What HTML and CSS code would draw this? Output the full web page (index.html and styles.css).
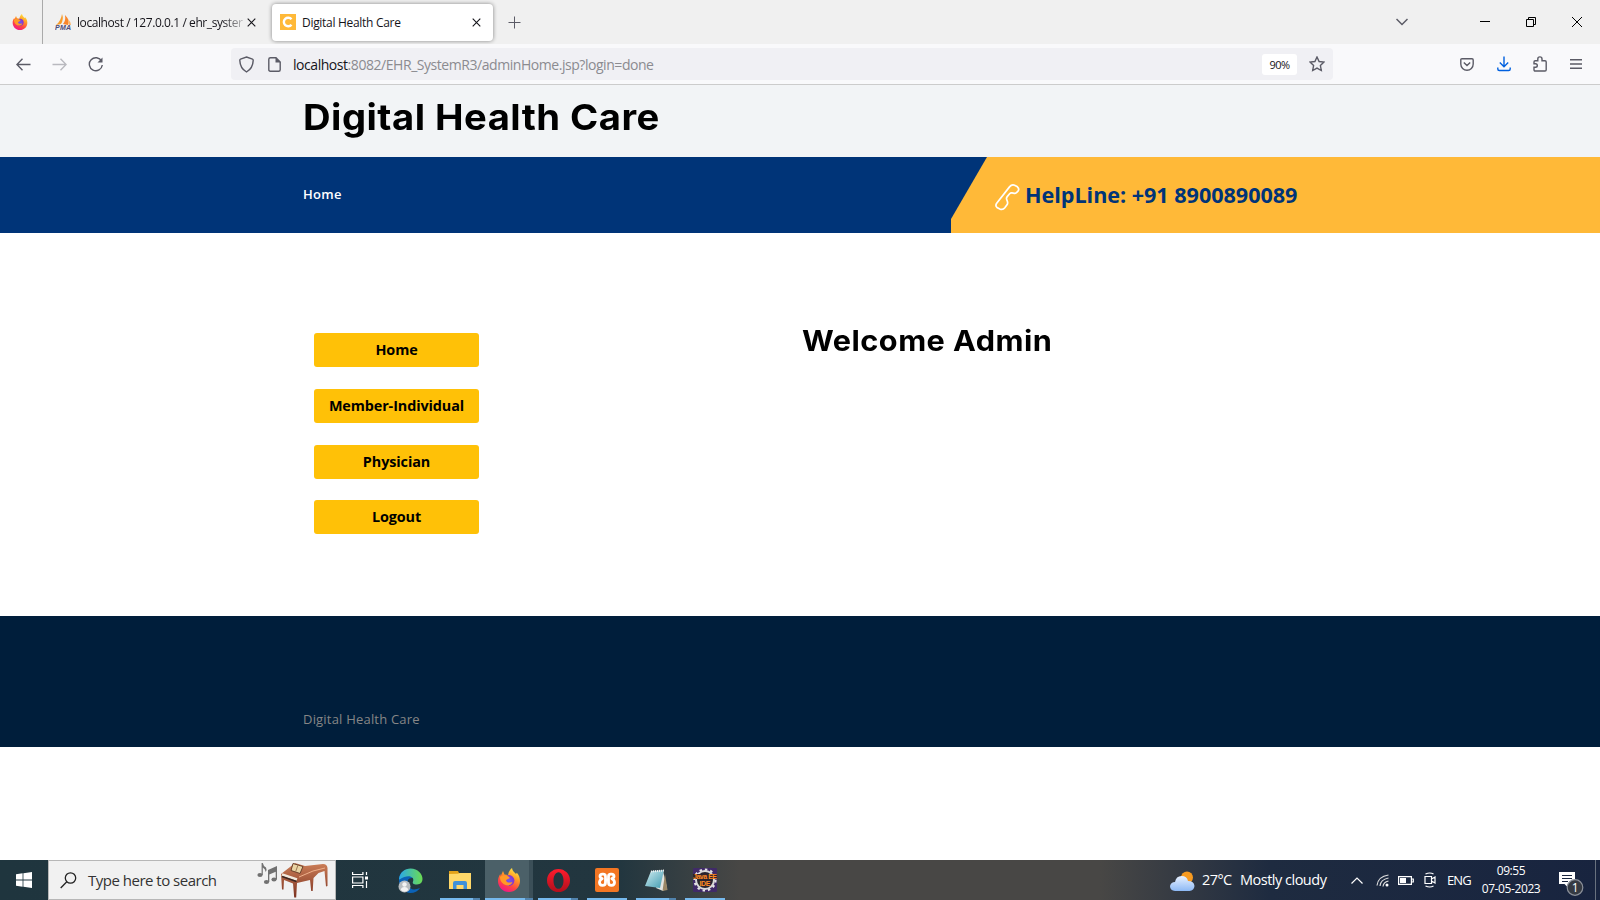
FILE: index.html
```html
<!DOCTYPE html>
<html lang="en">
<head>
<meta charset="utf-8">
<title>Digital Health Care</title>
<link rel="stylesheet" href="styles.css">
</head>
<body>
<svg class="defs" width="0" height="0" aria-hidden="true">
  <defs>
    <linearGradient id="fxFlame" x1="0.8" y1="0" x2="0.3" y2="1"><stop offset="0" stop-color="#fff04a"/><stop offset=".35" stop-color="#ffa025"/><stop offset=".7" stop-color="#ff4541"/><stop offset="1" stop-color="#f0148c"/></linearGradient>
    <radialGradient id="fxGlobe"><stop offset="0" stop-color="#6b5cf5"/><stop offset="1" stop-color="#8a32c8"/></radialGradient>
    <linearGradient id="edgeGreen" x1="0" y1="0" x2="1" y2="0"><stop offset="0" stop-color="#2aa9e8"/><stop offset="1" stop-color="#6bdc52"/></linearGradient>
    <linearGradient id="cloud" x1="0" y1="0" x2="0" y2="1"><stop offset="0" stop-color="#e8f1ff"/><stop offset="1" stop-color="#8db9f5"/></linearGradient>
    <linearGradient id="opera" x1="0" y1="0" x2="0" y2="1"><stop offset="0" stop-color="#ff1b2d"/><stop offset="1" stop-color="#b0101c"/></linearGradient>
    <linearGradient id="pad" x1="0" y1="0" x2="1" y2="1"><stop offset="0" stop-color="#d3eef2"/><stop offset="1" stop-color="#3f9bb0"/></linearGradient>
    <linearGradient id="wood" x1="0" y1="0" x2="0" y2="1"><stop offset="0" stop-color="#cd7f58"/><stop offset="1" stop-color="#7c3220"/></linearGradient>
    <symbol id="firefox" viewBox="0 0 24 24">
      <path fill="url(#fxFlame)" d="M12 24C5.500 24 1 19 1 13c0-3 1-5 2.300-7l.4 2L6 3l1.500 3.500L11 7c.5-3 2-5.500 4-7 .3 3 2.500 4.200 4 6l.8-1.200C22 7 23 10 23 13c0 6.200-5 11-11 11z"/>
      <circle cx="12" cy="12.500" r="5.400" fill="url(#fxGlobe)"/>
      <path fill="#ff9a26" d="M3 9c3-2.500 6-2 8.500-.5L13 10l-3 1.500C8.500 12 9 14 11 14.500c2 .4 3-.8 4.500-.2-1.500 3.500-6 4-9 1.700C4 14 3 12 3 9z"/>
    </symbol>
  </defs>
</svg>
<div class="screen">
  <div class="tabs">
    <svg class="fx-tab" width="16" height="16"><use href="#firefox"/></svg>
    <div class="tab tab-idle">
      <svg width="17" height="17" viewBox="0 0 17 17"><path d="M7 0q2 5-1 10L1 11q5-4 6-11z" fill="#f89c2a"/><path d="M10 1q5 5 3 10l-5-1q3-3 2-9z" fill="#f9852b"/><path d="M13 5q3 3 3 6h-2z" fill="#fbb365"/><text class="pma" x="0" y="15.500" textLength="16">PMA</text></svg>
      <span class="tab-name fade">localhost / 127.0.0.1 / ehr_syster</span>
      <svg class="x" width="9" height="9" viewBox="0 0 9 9"><path d="M.7.7l7.600 7.600M8.300.7L.7 8.300"/></svg>
    </div>
    <div class="tab tab-active">
      <span class="c-icon"><svg width="16" height="16" viewBox="0 0 16 16"><path d="M11.500 5.300A4.300 4.300 0 1 0 11.500 10.700" fill="none" stroke="#fff" stroke-width="2.400"/></svg></span>
      <span class="tab-name">Digital Health Care</span>
      <svg class="x" width="9" height="9" viewBox="0 0 9 9"><path d="M.7.7l7.600 7.600M8.300.7L.7 8.300"/></svg>
    </div>
    <svg class="plus" width="13" height="13" viewBox="0 0 13 13"><path d="M6.500.5v12M.5 6.500h12"/></svg>
    <div class="window-buttons">
      <svg width="12" height="8" viewBox="0 0 12 8" class="grey"><path d="M.5 1L6 6.500 11.500 1"/></svg>
      <svg width="10" height="10" viewBox="0 0 10 10"><path d="M0 4.500h10"/></svg>
      <svg width="10" height="10" viewBox="0 0 10 10"><path d="M.5 2.500h7v7h-7zM2.500 2V.5h7v7H8"/></svg>
      <svg width="10" height="10" viewBox="0 0 10 10"><path d="M0 0l10 10M10 0L0 10"/></svg>
    </div>
  </div>
  <div class="toolbar">
    <svg class="back" width="15" height="13" viewBox="0 0 15 13"><path d="M14.500 6.500H1M6.500.8L.9 6.500l5.600 5.700"/></svg>
    <svg class="forward" width="15" height="13" viewBox="0 0 15 13"><path d="M.5 6.500H14M8.500.8l5.600 5.700-5.600 5.700"/></svg>
    <svg class="reload" width="16" height="16" viewBox="0 0 16 16"><path d="M13.600 5.200A6.500 6.500 0 1 0 14.300 9"/><path d="M14.500 1.500v5H9.500z" fill="#5b5b66" stroke="none"/></svg>
    <div class="address">
      <svg class="shield" width="15" height="17" viewBox="0 0 15 17"><path d="M7.500 1L13.500 3.200q.8.300.7 1.200-.3 8-6.700 11.600Q1.100 12.400.8 4.400.7 3.500 1.500 3.200z"/></svg>
      <svg class="page-icon" width="13" height="15" viewBox="0 0 13 15"><path d="M2.500.8H8L12.200 5v7.700q0 1.500-1.500 1.500H2.300q-1.500 0-1.500-1.500V2.300Q.8.8 2.500.8z"/><path d="M7.500.5v5h5z" fill="#5b5b66" stroke="none"/></svg>
      <span class="url"><b>localhost</b>:8082/EHR_SystemR3/adminHome.jsp?login=done</span>
      <span class="zoom">90%</span>
      <svg class="star" width="16" height="16" viewBox="0 0 16 16"><path d="M8 1l2.100 4.500 4.900.6-3.600 3.400.9 5L8 12.100 3.700 14.500l.9-5L1 6.100l4.900-.6z"/></svg>
    </div>
    <div class="tools">
      <svg width="14" height="13" viewBox="0 0 14 13"><path d="M2 .8h10q1.200 0 1.200 1.200v4a6.200 6.200 0 0 1-12.400 0V2Q.8.800 2 .8zM3.800 4.500L7 7.600l3.200-3.100"/></svg>
      <svg class="download" width="14" height="16" viewBox="0 0 14 16"><path d="M7 .5v10M2.800 6.500L7 10.700l4.200-4.200M.8 11.500V13q0 1.500 1.500 1.500h9.400q1.500 0 1.500-1.500v-1.500"/></svg>
      <svg width="14" height="16" viewBox="0 0 14 16"><path d="M4.800 4.800V3a2 2 0 0 1 4.200 0v1.800h3q1.200 0 1.200 1.200v7.800q0 1.200-1.200 1.200H2.200Q1 15 1 13.800v-2.500h1.500a1.700 1.700 0 0 0 0-3.600H1V6q0-1.200 1.200-1.200z"/></svg>
      <svg width="12" height="10" viewBox="0 0 12 10"><path d="M0 .8h12M0 5h12M0 9.200h12"/></svg>
    </div>
  </div>
  <main class="site">
    <header class="brand"><h1>Digital Health Care</h1></header>
    <nav class="menu">
      <a class="menu-link">Home</a>
      <div class="helpline">
        <svg width="25" height="27" viewBox="0 0 25 27"><path d="M1.500 19.500L14.500 2.900q2.500-3 5.600-1.400l2.300 1.300q2.400 2.200.4 4.600l-1.300 1.300q-1.200 1-3 .5l-1.700-.3q-1.300-.1-2.200.9l-2.400 2.800q-1.200 1.500-.4 3.100l.6 1.900q.6 1.800-.4 3.200l-2.200 3q-2 2.500-5 1.200L2 23.500Q.1 21.600 1.500 19.500z" fill="none" stroke="#fff" stroke-width="1.700"/></svg>
        <span>HelpLine: +91 8900890089</span>
      </div>
    </nav>
    <section class="content">
      <div class="side"><a>Home</a><a>Member-Individual</a><a>Physician</a><a>Logout</a></div>
      <h2>Welcome Admin</h2>
    </section>
    <footer class="foot"><span>Digital Health Care</span></footer>
  </main>
  <div class="taskbar">
    <div class="start"><svg width="16" height="16" viewBox="0 0 16 16"><path fill="#fff" d="M0 2.300L6.600 1.300V7.600H0zM7.400 1.200L16 0v7.600H7.400zM0 8.400h6.600v6.300L0 13.700zM7.400 8.400H16V16l-8.600-1.200z"/></svg></div>
    <div class="search">
      <svg width="17" height="17" viewBox="0 0 17 17"><circle cx="10.500" cy="6" r="5.200"/><path d="M6.800 9.800L.7 16"/></svg>
      <span>Type here to search</span>
      <svg class="piano" width="72" height="36" viewBox="0 0 72 36">
        <g fill="#717171"><ellipse cx="3" cy="13" rx="2.600" ry="2"/><ellipse cx="9.500" cy="20" rx="2.600" ry="2"/><ellipse cx="17" cy="17.500" rx="2.600" ry="2"/><path d="M4.600 1h1.200q.5 3 3.200 4.500 1.200 2-.3 4.500Q8.500 7 5.800 5.500V13H4.600zM11 8l9-4v13.500h-1.300V9.700l-6.400 2.700V20H11z"/></g>
        <path fill="url(#wood)" d="M24 12L33 5l5-4 10 3 18-2q4 0 4.500 4v18l-1.500.5L67.500 9l-6 2-5 5-.8 13h-1.500L53 18l-13 3-.8 14.500h-2L36 21.500l-9-3.500-.5 9.500H25z"/>
        <path d="M25 12.500l15 5" stroke="#f2e9dd" stroke-width="2.500"/><path d="M25 14.500l14.500 5" stroke="#3b2621" stroke-width="1.500"/>
        <path d="M36 1.500l10 3-3 7-9-3z" fill="#ead4a4" stroke="#69402b"/><path d="M41 3l-2.500 7" stroke="#9c7954"/><path d="M42 15l14-6 12-3" stroke="#eeb08b" fill="none"/>
      </svg>
    </div>
    <div class="apps">
      <div class="app view"><svg width="17" height="16" viewBox="0 0 17 16" fill="none" stroke="#fff" stroke-width="1.200"><path d="M.6 0v2.500h10.300V0M.6 16v-2.500h10.300V16M.6 5h10.300v6H.6zM14.500 0v3M14.500 9v7"/><path d="M13 4.500h3v3h-3z" fill="#fff" stroke="none"/></svg></div>
      <div class="app edge"><svg width="25" height="25" viewBox="0 0 25 25"><path fill="#0b63b8" d="M1 12C1 5 6 1 12 1c8 0 9 7 9 7l-7 2q-6 0-4 7 3 7 12 3-3 5-10 5C5 24 1 19 1 12z"/><path fill="url(#edgeGreen)" d="M1 11C2 4 7 .5 12.500.5 20 .5 24.500 6 24.500 11q0 5-5.500 5.500c-3 .2-5-1-4-3 2-5-5-8-13.500-2z"/><circle cx="6.500" cy="18.500" r="6" fill="#b9bdc0"/><circle cx="6.500" cy="16.500" r="2.200" fill="#f3f3f3"/><path d="M2.700 22q.5-3 3.800-3t3.800 3q-3.800 3.500-7.600 0z" fill="#f3f3f3"/></svg></div>
      <div class="app run split"><svg width="22" height="20" viewBox="0 0 22 20"><path fill="#e3a21a" d="M0 1h9l1 2v3H0z"/><path fill="#ffd869" d="M0 4l9-.2L10.500 3H22v16H0z"/><path fill="#3f91d8" d="M4 19v-6q0-2 2-2h10q2 0 2 2v6h-3.500v-4h-7v4z"/></svg></div>
      <div class="app run split current"><svg width="24" height="24"><use href="#firefox"/></svg></div>
      <div class="app run split"><svg width="23" height="23" viewBox="0 0 23 23"><path fill="url(#opera)" fill-rule="evenodd" d="M11.500 0a11.500 11.500 0 1 0 0 23a11.500 11.500 0 1 0 0-23zM11.500 3.200c3 0 5 3.700 5 8.300s-2 8.300-5 8.300-5-3.700-5-8.300 2-8.300 5-8.300z"/></svg></div>
      <div class="app run"><svg width="24" height="24" viewBox="0 0 24 24"><rect width="24" height="24" rx="2" fill="#f37623"/><g fill="none" stroke="#fff" stroke-width="2.800" stroke-linejoin="round"><path d="M10.500 12V8.500Q10.500 6.200 8.200 6.200H7.500Q5 6.200 5 8.300q0 1.700 2.200 2.400Q4.500 11.800 4.500 14.500t3 2.900q3 0 3-2.900V12h3V8.500q0-2.300 2.300-2.300h.7q2.500 0 2.500 2.100 0 1.700-2.200 2.400 2.700 1.100 2.700 3.800t-3 2.900q-3 0-3-2.900V12"/></g></svg></div>
      <div class="app run split"><svg width="23" height="23" viewBox="0 0 23 23"><path fill="#e3e4df" d="M18 2l4 17-4 3-7-3z"/><path fill="#9a8766" d="M20 5l2.500 16-5 1z"/><path fill="url(#pad)" d="M6 2l13-1-4 18-15-2z"/><path d="M6 2.500l13-1" stroke="#eee" stroke-width="2" stroke-dasharray="1 1"/></svg></div>
      <div class="app run"><svg width="24" height="24" viewBox="0 0 24 24"><rect width="24" height="24" rx="1" fill="#402a68"/><circle cx="12" cy="12" r="9" fill="#28232d" stroke="#d9d9d9" stroke-width="2"/><circle cx="12" cy="12" r="10.600" fill="none" stroke="#e6e6e6" stroke-width="2" stroke-dasharray="2.500 3"/><path d="M0 6h24v5H0z" fill="#30242c"/><g class="ide"><text x="0" y="11" textLength="24">Java EE</text><text x="6.500" y="17.500" textLength="11">IDE</text></g></svg></div>
    </div>
    <div class="tray">
      <svg class="weather" width="25" height="21" viewBox="0 0 25 21"><circle cx="17" cy="6.500" r="6" fill="#f79a20"/><path fill="url(#cloud)" d="M5 20q-5-.5-5-5 1-4 5-4 1-6 6.500-6T18 10q6 0 6.500 5-.5 4.500-5 5z"/></svg>
      <span class="temp">27°C</span><span class="sky">Mostly cloudy</span>
      <svg class="up" width="12" height="7" viewBox="0 0 12 7"><path d="M.5 6.500L6 1l5.500 5.500"/></svg>
      <svg class="wifi" width="14" height="13" viewBox="0 0 14 13"><path d="M1 11.500Q2 2.500 12.500 1M4 12Q4.500 5.500 12.500 4M7 12.500Q7.500 8 12.500 7"/><circle cx="11" cy="11" r="1.500" fill="#fff" stroke="none"/></svg>
      <svg class="battery" width="16" height="9" viewBox="0 0 16 9"><path d="M.6.6h12.800v7.800H.6zM13.500 3h1.800v3h-1.800"/><path d="M2 2h6v5H2z" fill="#fff" stroke="none"/></svg>
      <svg class="meet" width="12" height="16" viewBox="0 0 12 16"><path d="M1 4.500h6.500v7H1zM7.500 7L11 5v6L7.500 9M1.500 2Q6 0 9.500 2M1.500 14q4.500 2 8 0"/></svg>
      <span class="lang">ENG</span>
      <div class="clock"><span>09:55</span><span class="date">07-05-2023</span></div>
      <svg class="notice" width="25" height="25" viewBox="0 0 25 25"><path fill="#fff" d="M0 0h16v12H9.500v4l-4-4H0z"/><path d="M3 3.500h10M3 6.500h10M3 9.500h6" stroke="#1a2640"/><circle cx="16" cy="15.500" r="7.800" fill="#353a42" stroke="#8b9099"/><text x="12.800" y="20">1</text></svg>
      <i class="desk-edge"></i>
    </div>
  </div>
</div>
</body>
</html>
```

FILE: styles.css
```css
* { box-sizing: border-box; }
body { margin: 0; font-family: "Open Sans", "Noto Sans", sans-serif; background: #fff; }
svg { display: block; flex: none; }
.defs { position: absolute; }
.screen { width: 1600px; height: 900px; overflow: hidden; display: flex; flex-direction: column; }
.screen span { white-space: nowrap; }

/* Browser chrome */
.tabs { height: 44px; flex: none; background: #f0f0f0; display: flex; align-items: center; }
.fx-tab { margin-left: 12px; }
.tab { display: flex; align-items: center; font-size: 12px; color: #15141a; }
.tab-idle { height: 44px; margin-left: 14px; width: 230px; border-left: 1px solid #aaa; padding-left: 12px; }
.pma { font: italic bold 7px "Liberation Sans", sans-serif; fill: #4b4b78; }
.tab-name { letter-spacing: -.3px; margin-left: 5px; padding-top: 1px; }
.fade { width: 170px; letter-spacing: -.42px; -webkit-mask-image: linear-gradient(90deg, #000 145px, transparent 172px); mask-image: linear-gradient(90deg, #000 145px, transparent 172px); }
.x { fill: none; stroke: #15141a; stroke-width: 1.1; }
.tab-idle .x { margin-left: 0; }
.tab-active { width: 221px; height: 37px; background: #fff; border-radius: 4px; box-shadow: 0 0 4px rgba(0,0,0,.45); padding: 0 12px 0 8px; }
.tab-active .tab-name { margin-left: 6px; }
.tab-active .x { margin-left: auto; }
.c-icon { width: 16px; height: 16px; background: #ffb938; }
.plus { margin-left: 15px; fill: none; stroke: #5b5b66; margin-top: 1px; }
.window-buttons { margin-left: auto; margin-right: 18px; display: flex; align-items: center; fill: none; stroke: #000; }
.window-buttons svg { fill: none; margin-left: 36px; }
.window-buttons svg:nth-child(2) { margin-left: 72px; }
.window-buttons .grey { stroke: #5b5b66; stroke-width: 1.5; }
.toolbar { height: 41px; flex: none; background: #f9f9fb; border-bottom: 1px solid #ccc; display: flex; align-items: center; fill: none; stroke: #5b5b66; stroke-width: 1.4; }
.back { margin-left: 16px; }
.forward { margin-left: 21px; opacity: .4; }
.reload { margin-left: 21px; }
.address { margin-left: 127px; width: 1102px; height: 32px; border-radius: 4px; background: #f0f0f4; display: flex; align-items: center; padding: 0 8px; }
.page-icon { margin-left: 14px; }
.url { margin-left: 12px; font-size: 14px; letter-spacing: -.45px; color: #8b8b90; padding-top: 1px; }
.url b { font-weight: 400; color: #15141a; }
.zoom { margin-left: auto; width: 35px; height: 21px; background: #fff; border-radius: 3px; font-size: 11px; line-height: 22px; text-align: center; letter-spacing: -.5px; color: #15141a; }
.star { margin-left: 12px; }
.tools { display: flex; align-items: center; margin-left: 127px; width: 122px; justify-content: space-between; }
.download { stroke: #0060df; }

/* Site */
.site { flex: 1; }
.brand { height: 72px; background: #f2f4f6; padding: 11px 0 0 303px; }
h1, h2 { margin: 0; font-family: Inter, sans-serif; font-weight: 700; color: #000; white-space: nowrap; transform: scaleX(1.076); transform-origin: 0 0; }
h1 { font-size: 35.5px; line-height: 44px; letter-spacing: .45px; }
.menu { height: 76px; background: #003478; display: flex; align-items: center; padding-left: 303px; }
.menu-link { color: #fff; font-size: 13px; font-weight: 600; line-height: 18px; letter-spacing: .3px; width: 648px; margin-top: -2px; }
.helpline { flex: 1; height: 76px; background: #ffb938; clip-path: polygon(36px 0, 100% 0, 100% 100%, 0 100%, 0 62px); display: flex; align-items: center; padding-left: 44px; color: #003478; font-size: 21.6px; font-weight: 700; letter-spacing: -.03px; }
.helpline svg { margin-top: 4px; }
.helpline span { margin: -2px 0 0 5px; }
.content { height: 383px; display: flex; }
.side { margin-left: 314px; width: 165px; padding-top: 100px; display: flex; flex-direction: column; gap: 21.75px; }
.side a { height: 34px; flex: none; border-radius: 3px; background: #ffc107; color: #000; font-size: 14.4px; font-weight: 700; line-height: 34.5px; letter-spacing: -.1px; text-align: center; white-space: nowrap; }
h2 { margin: 88px 0 0 323px; font-size: 28.5px; line-height: 40px; letter-spacing: .45px; }
.foot { height: 131px; background: #001e3b; padding: 93px 0 0 303px; color: #868686; font-size: 13px; line-height: 20px; letter-spacing: .2px; }

/* Desktop taskbar */
.taskbar { height: 40px; flex: none; display: flex; color: #fff; background: linear-gradient(90deg, #1f353e 0, #22363f 620px, #484745 740px, #484745 1100px, #1e2b40 1270px, #18243f 1600px); }
.start { width: 48px; padding: 12px 16px; }
.search { width: 288px; height: 40px; background: #f1f1f1; border: 1px solid #b7b7b7; display: flex; align-items: center; padding-left: 11px; color: #333; font-size: 15px; letter-spacing: -.5px; }
.search > svg:first-child { fill: none; stroke: #222; stroke-width: 1.3; }
.search span { margin-left: 11px; width: 128px; }
.piano { margin-left: 41px; fill: none; }
.apps { display: flex; padding-left: 0; }
.app { width: 40px; margin-right: 9px; display: flex; align-items: center; justify-content: center; }
.view { width: 48px; margin-right: 3px; }
.edge { width: 48px; margin-right: 5px; }
.edge svg { margin-left: -1px; }
.run { border-bottom: 2px solid #76b9ed; padding-top: 2px; }
.split { border-image: linear-gradient(90deg, #76b9ed 80%, #5183ad 80%) 2; border-style: solid; border-width: 0 0 2px; }
.current { width: 48px; margin: 0 5px 0 -4px; background: linear-gradient(90deg, #4b6068 44px, #3b4f58 44px); }
.ide { font: bold 7px "Liberation Sans", sans-serif; fill: #ff8b22; }
.tray { margin-left: auto; width: 430px; display: flex; align-items: center; font-size: 14.5px; fill: none; stroke: none; }
.tray > svg { stroke-width: 1.2; }
.tray > span { margin-top: -1px; }
.weather { margin-top: 2px; }
.temp { margin-left: 7px; width: 38px; letter-spacing: -.6px; }
.sky { width: 87px; letter-spacing: -.5px; }
.up { margin-left: 24px; stroke: #fff; }
.wifi { margin-left: 13px; stroke: #ddd; }
.battery { margin-left: 8px; stroke: #fff; }
.meet { margin-left: 10px; stroke: #fff; }
.lang { margin-left: 11px; width: 24px; font-size: 13px; letter-spacing: -.9px; }
.clock { width: 60px; margin-left: 10px; display: flex; flex-direction: column; align-items: center; font-size: 12px; line-height: 18px; letter-spacing: -.4px; }
.notice { margin-left: 18px; margin-top: 9px; font-size: 12px; }
.notice text { fill: #fff; }
.desk-edge { margin-left: 11px; width: 1px; height: 40px; background: #68717e; }
```
